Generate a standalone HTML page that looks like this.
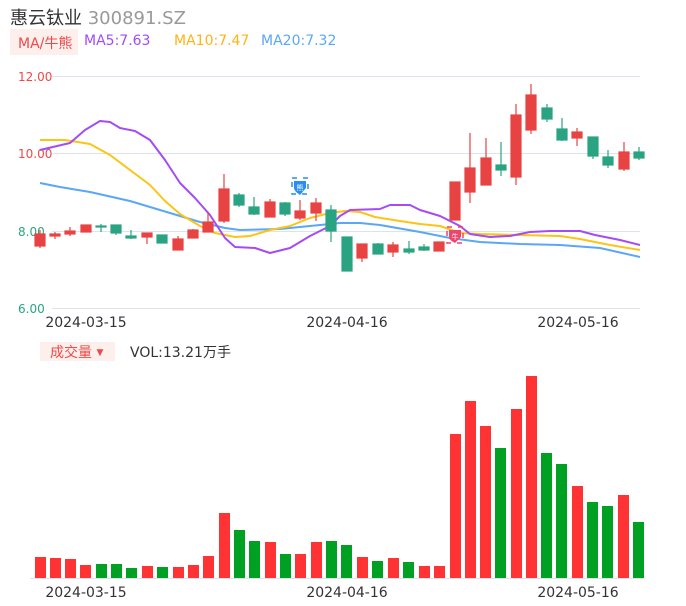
<!DOCTYPE html>
<html><head><meta charset="utf-8"><style>
body{margin:0;width:686px;height:606px;background:#fff;overflow:hidden;font-family:"DejaVu Sans","Noto Sans CJK SC",sans-serif;position:relative}
.a{position:absolute;white-space:nowrap}
</style></head><body>
<div class="a" style="left:10px;top:4px;font-size:18px;color:#333">惠云钛业 <span style="color:#999">300891.SZ</span></div>
<div class="a" style="left:10px;top:29px;width:68px;height:26px;background:#fdf0ec"></div>
<div class="a" style="left:18px;top:33px;font-size:14px;color:#f04848">MA/牛熊</div>
<div class="a" style="left:84px;top:33px;font-size:14px;color:#a34cf5">MA5:7.63</div>
<div class="a" style="left:174px;top:33px;font-size:14px;color:#fcb414">MA10:7.47</div>
<div class="a" style="left:261px;top:33px;font-size:14px;color:#5aa7f7">MA20:7.32</div>
<div class="a" style="left:40px;top:342px;width:75px;height:19px;background:#fdf0ec"></div>
<div class="a" style="left:50px;top:342px;font-size:14px;color:#f04848">成交量 <span style="font-size:9px;vertical-align:2px">▼</span></div>
<div class="a" style="left:130px;top:342px;font-size:14px;color:#333">VOL:13.21万手</div>
<svg class="a" style="left:0;top:0" width="686" height="606" font-family="DejaVu Sans,sans-serif">
<g stroke="#dde3ee" stroke-width="1">
<line x1="52" y1="76.5" x2="640" y2="76.5"/><line x1="52" y1="153.5" x2="640" y2="153.5"/><line x1="52" y1="231.5" x2="640" y2="231.5"/><line x1="52" y1="308.5" x2="640" y2="308.5"/><line x1="30" y1="578.5" x2="645" y2="578.5"/>
</g>
<g font-size="12"><text x="18" y="81" fill="#f04848">12.00</text><text x="18" y="158" fill="#f04848">10.00</text><text x="18" y="236" fill="#2aa383">8.00</text><text x="18" y="313" fill="#2aa383">6.00</text></g>
<g font-size="14" fill="#333" text-anchor="middle"><text x="86" y="327">2024-03-15</text><text x="347" y="327">2024-04-16</text><text x="578" y="327">2024-05-16</text>
<text x="86" y="597">2024-03-15</text><text x="347" y="597">2024-04-16</text><text x="578" y="597">2024-05-16</text></g>
<g fill="none" stroke-width="2" stroke-linejoin="round">
<polyline stroke="#5aa7f7" points="40,183 60,187 90,192 130,201 170,213 200,222 225,228 240,230 280,229 320,225 340,223 360,223 380,225 420,232 450,238 480,242 520,244 560,245 600,248 640,257"/>
<polyline stroke="#fcc414" points="40,140 65,140 90,144 110,155 130,170 150,185 165,201 180,214 200,226 215,233 235,237 250,236 270,230 290,226 310,218 330,213 345,211 360,212 375,217 400,221 420,224 440,226 460,233 480,234 520,235 560,236 580,239 610,245 640,250"/>
<polyline stroke="#a34cf5" points="40,150 70,143 85,130 100,121 110,122 120,128 135,131 150,140 165,160 180,183 195,198 210,215 225,238 235,247 255,248 270,253 290,248 310,236 330,226 340,216 350,210 380,209 390,205 410,205 420,210 440,216 460,226 470,234 490,237 510,236 530,232 550,231 580,231 595,235 620,240 640,245"/>
</g>
<g stroke-width="1.2">
<g stroke="#e84343" fill="#e84343">
<line x1="40" y1="230" x2="40" y2="248"/><rect x="35" y="234" width="10" height="12"/>
<line x1="55" y1="232" x2="55" y2="239"/><rect x="50" y="234" width="10" height="2"/>
<line x1="70" y1="227" x2="70" y2="236"/><rect x="65" y="231" width="10" height="3"/>
<rect x="81" y="225" width="10" height="7"/>
<line x1="147" y1="233" x2="147" y2="244"/><rect x="142" y="233" width="10" height="4"/>
<line x1="178" y1="236" x2="178" y2="250"/><rect x="173" y="239" width="10" height="11"/>
<line x1="193" y1="229" x2="193" y2="238"/><rect x="188" y="230" width="10" height="8"/>
<line x1="208" y1="212" x2="208" y2="232"/><rect x="203" y="222" width="10" height="10"/>
<line x1="224" y1="174" x2="224" y2="223"/><rect x="219" y="189" width="10" height="32"/>
<line x1="270" y1="199" x2="270" y2="217"/><rect x="265" y="202" width="10" height="15"/>
<line x1="300" y1="200" x2="300" y2="220"/><rect x="295" y="211" width="10" height="7"/>
<line x1="316" y1="198" x2="316" y2="221"/><rect x="311" y="203" width="10" height="10"/>
<line x1="362" y1="244" x2="362" y2="262"/><rect x="357" y="244" width="10" height="14"/>
<line x1="393" y1="242" x2="393" y2="257"/><rect x="388" y="245" width="10" height="7"/>
<rect x="434" y="242" width="10" height="9"/>
<rect x="450" y="182" width="10" height="38"/>
<line x1="470" y1="133" x2="470" y2="203"/><rect x="465" y="168" width="10" height="24"/>
<line x1="486" y1="138" x2="486" y2="185"/><rect x="481" y="158" width="10" height="27"/>
<line x1="516" y1="104" x2="516" y2="185"/><rect x="511" y="115" width="10" height="62"/>
<line x1="531" y1="84" x2="531" y2="134"/><rect x="526" y="95" width="10" height="35"/>
<line x1="577" y1="128" x2="577" y2="146"/><rect x="572" y="132" width="10" height="6"/>
<line x1="624" y1="142" x2="624" y2="171"/><rect x="619" y="152" width="10" height="17"/>
</g>
<g stroke="#2aa383" fill="#2aa383">
<line x1="101" y1="224" x2="101" y2="232"/><rect x="96" y="226" width="10" height="1"/>
<line x1="116" y1="225" x2="116" y2="235"/><rect x="111" y="225" width="10" height="8"/>
<line x1="131" y1="230" x2="131" y2="239"/><rect x="126" y="236" width="10" height="2"/>
<rect x="157" y="235" width="10" height="8"/>
<line x1="239" y1="193" x2="239" y2="207"/><rect x="234" y="195" width="10" height="10"/>
<line x1="254" y1="197" x2="254" y2="215"/><rect x="249" y="207" width="10" height="7"/>
<line x1="285" y1="202" x2="285" y2="216"/><rect x="280" y="203" width="10" height="11"/>
<line x1="331" y1="205" x2="331" y2="242"/><rect x="326" y="210" width="10" height="21"/>
<rect x="342" y="237" width="10" height="34"/>
<line x1="378" y1="243" x2="378" y2="254"/><rect x="373" y="244" width="10" height="10"/>
<line x1="409" y1="241" x2="409" y2="254"/><rect x="404" y="249" width="10" height="3"/>
<line x1="424" y1="244" x2="424" y2="251"/><rect x="419" y="247" width="10" height="3"/>
<line x1="501" y1="142" x2="501" y2="176"/><rect x="496" y="165" width="10" height="5"/>
<line x1="547" y1="104" x2="547" y2="122"/><rect x="542" y="108" width="10" height="11"/>
<line x1="562" y1="118" x2="562" y2="141"/><rect x="557" y="129" width="10" height="11"/>
<line x1="593" y1="137" x2="593" y2="159"/><rect x="588" y="137" width="10" height="19"/>
<line x1="608" y1="150" x2="608" y2="168"/><rect x="603" y="157" width="10" height="8"/>
<line x1="639" y1="147" x2="639" y2="160"/><rect x="634" y="152" width="10" height="6"/>
</g></g>
<g><rect x="292" y="178" width="16" height="16" fill="none" stroke="#2a8cf5" stroke-width="1.5" stroke-dasharray="5 6"/><path d="M294 181 L306 181 L306 188 Q300 195 300 195 Q294 191 294 188Z" fill="#2a8cf5"/><text x="300" y="190" font-size="7" fill="#fff" text-anchor="middle">熊</text></g>
<g><rect x="447" y="227" width="16" height="16" fill="none" stroke="#f0446a" stroke-width="1.5" stroke-dasharray="5 6"/><path d="M449 230 L461 230 L461 237 Q455 243 455 243 Q449 240 449 237Z" fill="#f0446a"/><text x="455" y="239" font-size="7" fill="#fff" text-anchor="middle">牛</text></g>
<g fill="#ff3333">
<rect x="35" y="557" width="11" height="21"/><rect x="50" y="558" width="11" height="20"/><rect x="65" y="559" width="11" height="19"/><rect x="80" y="565" width="11" height="13"/>
<rect x="142" y="566" width="11" height="12"/><rect x="173" y="567" width="11" height="11"/><rect x="188" y="565" width="11" height="13"/><rect x="203" y="556" width="11" height="22"/><rect x="219" y="513" width="11" height="65"/>
<rect x="265" y="542" width="11" height="36"/><rect x="295" y="554" width="11" height="24"/><rect x="311" y="542" width="11" height="36"/>
<rect x="357" y="557" width="11" height="21"/><rect x="388" y="558" width="11" height="20"/><rect x="419" y="566" width="11" height="12"/><rect x="434" y="566" width="11" height="12"/>
<rect x="450" y="434" width="11" height="144"/><rect x="465" y="401" width="11" height="177"/><rect x="480" y="426" width="11" height="152"/><rect x="511" y="409" width="11" height="169"/><rect x="526" y="376" width="11" height="202"/><rect x="572" y="486" width="11" height="92"/><rect x="618" y="495" width="11" height="83"/>
</g>
<g fill="#00a023">
<rect x="96" y="564" width="11" height="14"/><rect x="111" y="564" width="11" height="14"/><rect x="126" y="568" width="11" height="10"/><rect x="157" y="567" width="11" height="11"/>
<rect x="234" y="530" width="11" height="48"/><rect x="249" y="541" width="11" height="37"/><rect x="280" y="554" width="11" height="24"/><rect x="326" y="541" width="11" height="37"/><rect x="341" y="545" width="11" height="33"/>
<rect x="372" y="561" width="11" height="17"/><rect x="403" y="562" width="11" height="16"/><rect x="495" y="448" width="11" height="130"/>
<rect x="541" y="453" width="11" height="125"/><rect x="556" y="464" width="11" height="114"/><rect x="587" y="502" width="11" height="76"/><rect x="602" y="506" width="11" height="72"/><rect x="633" y="522" width="11" height="56"/>
</g>
</svg>
</body></html>
